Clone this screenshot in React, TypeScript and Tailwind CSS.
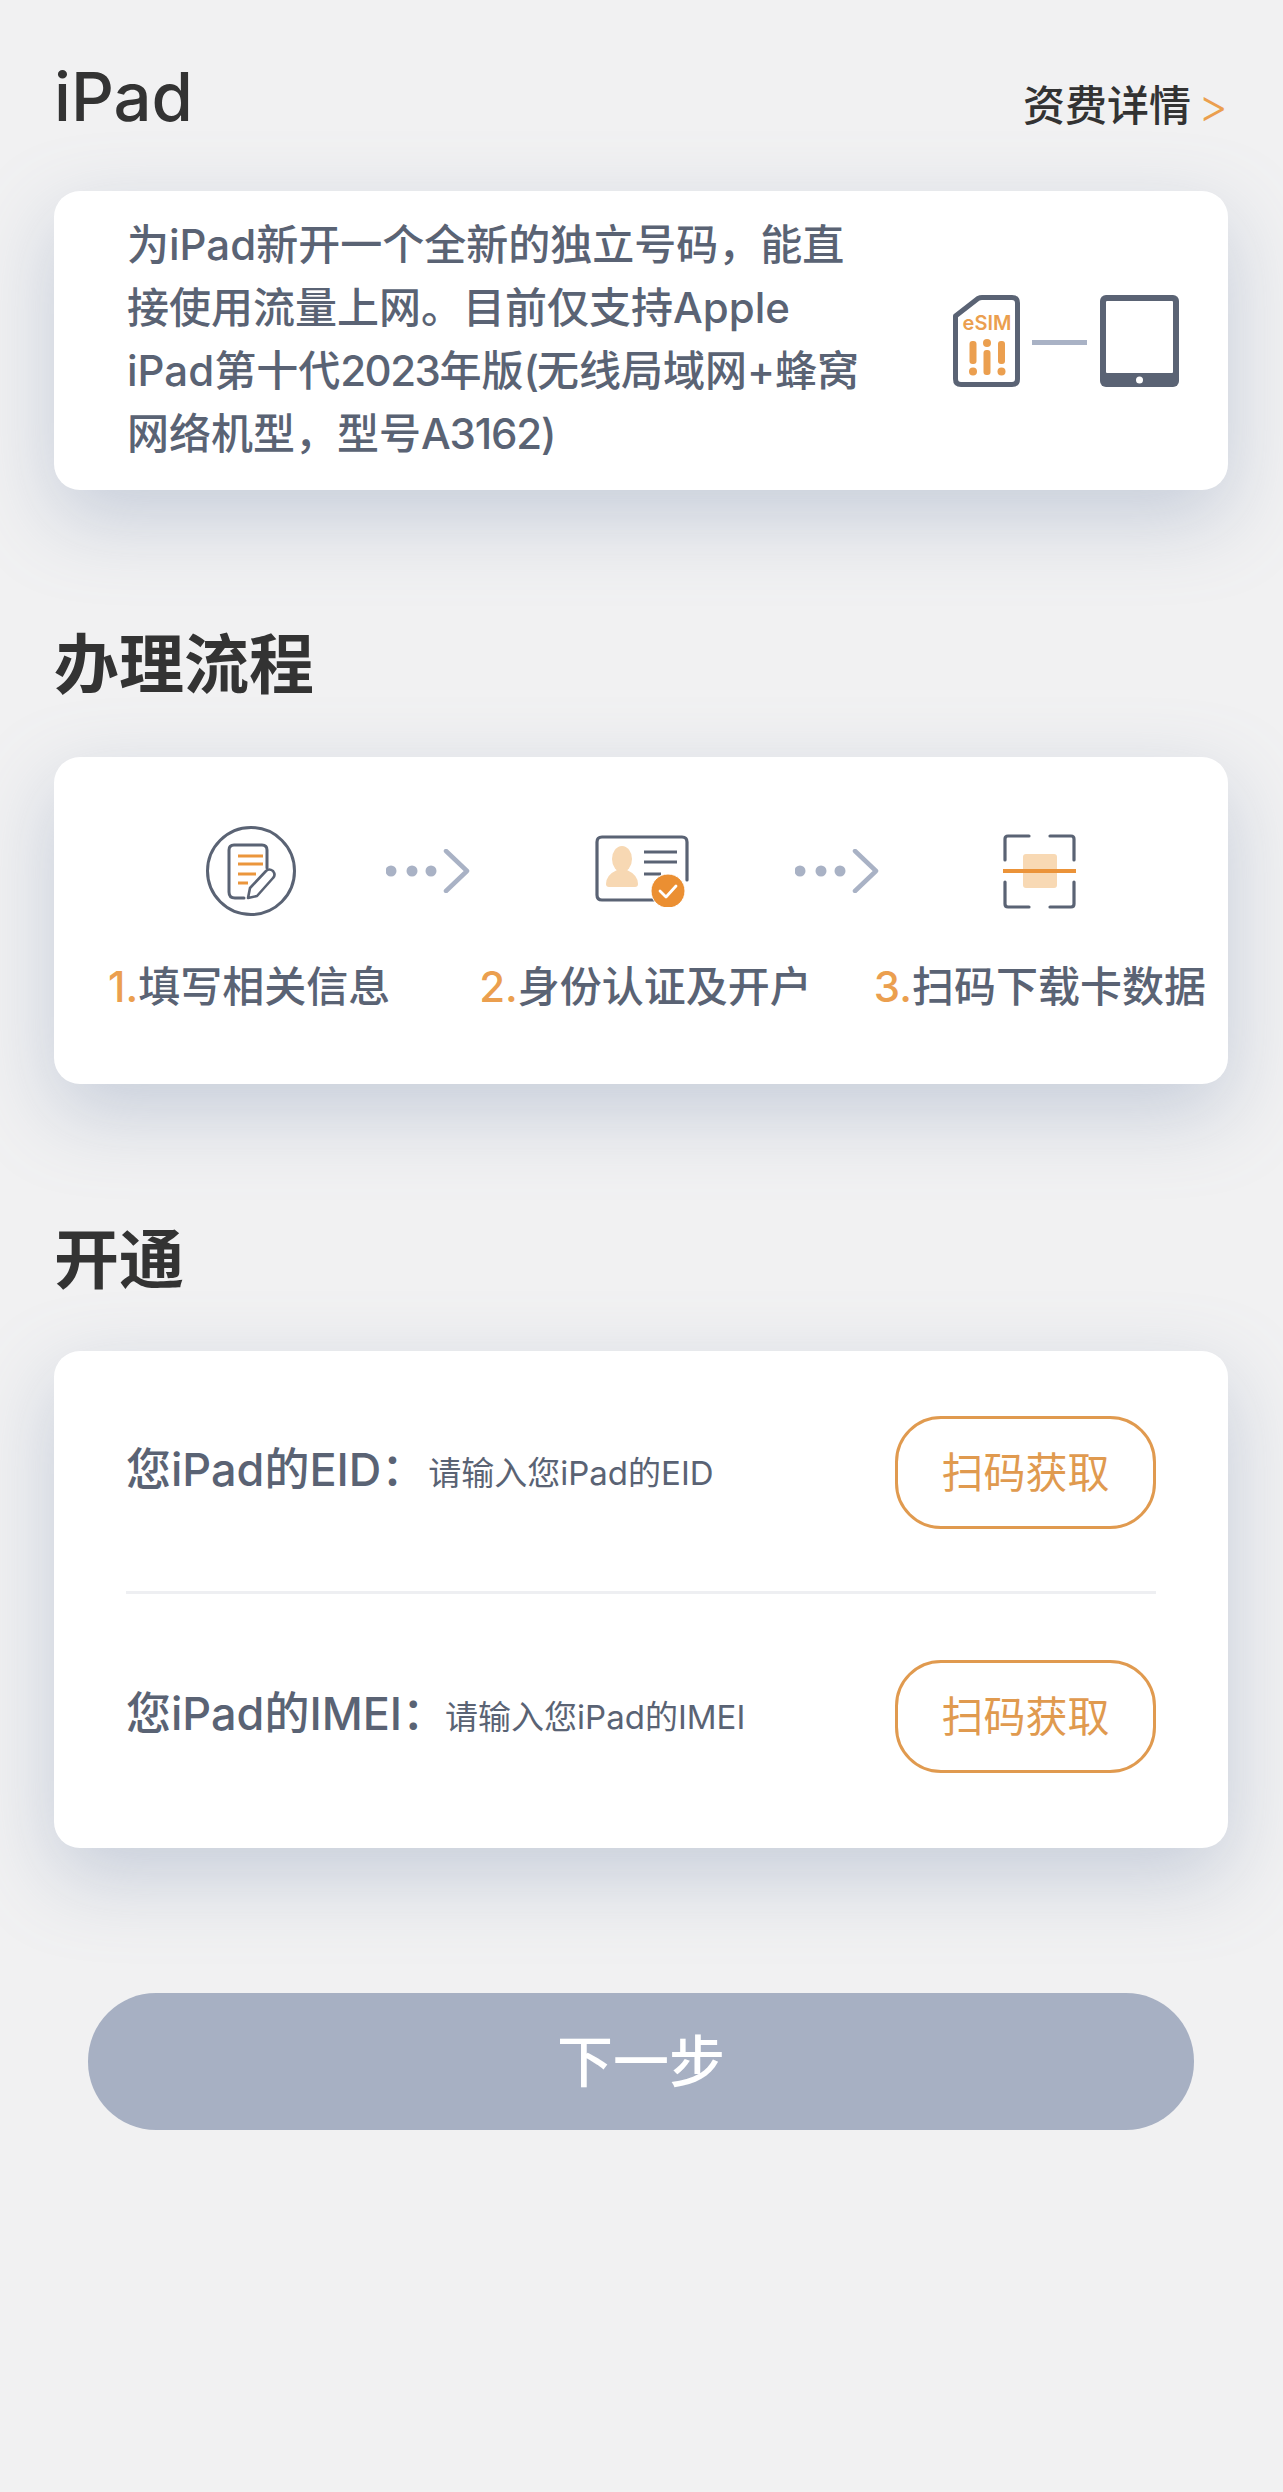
import React from "react";

const Arrow = () => (
  <svg width="84" height="44" viewBox="0 0 84 44" fill="none" className="shrink-0">
    <circle cx="5" cy="22" r="5.5" fill="#a9b2c5" />
    <circle cx="26" cy="22" r="5.5" fill="#a9b2c5" />
    <circle cx="45" cy="22" r="5.5" fill="#a9b2c5" />
    <path d="M60 2 L81 22 L60 42" stroke="#a9b2c5" strokeWidth="4.5" strokeLinecap="round" strokeLinejoin="round" />
  </svg>
);

const SimIcon = () => (
  <svg width="226" height="92" viewBox="0 0 226 92" fill="none" className="shrink-0">
    <path d="M2.5 21 L25 3.5 Q27 2.5 29 2.5 H59 Q64.500 2.5 64.500 8 V84 Q64.500 89.500 59 89.500 H8 Q2.500 89.500 2.500 84 Z" fill="#fff" stroke="#5a6374" strokeWidth="5" strokeLinejoin="round" />
    <text x="34" y="35" textAnchor="middle" fontSize="20" fontWeight="600" fill="#eb9f4f" fontFamily="Inter, sans-serif">eSIM</text>
    <rect x="16.500" y="46" width="7" height="23" rx="3" fill="#eb9f4f" />
    <circle cx="20" cy="76.500" r="4" fill="#eb9f4f" />
    <circle cx="34" cy="48" r="4" fill="#eb9f4f" />
    <rect x="30.500" y="55" width="7" height="25" rx="3" fill="#eb9f4f" />
    <rect x="45" y="46" width="7" height="23" rx="3" fill="#eb9f4f" />
    <circle cx="48.500" cy="76.500" r="4" fill="#eb9f4f" />
    <rect x="79" y="45" width="55" height="5" fill="#a9b2c5" />
    <rect x="147" y="0" width="79" height="92" rx="6" fill="#5a6374" />
    <rect x="153" y="6" width="67" height="72" rx="1" fill="#fff" />
    <circle cx="186.500" cy="85" r="3.500" fill="#fff" />
  </svg>
);

const FormIcon = () => (
  <svg width="90" height="90" viewBox="0 0 90 90" fill="none" className="shrink-0">
    <circle cx="45" cy="45" r="43.500" stroke="#5a6374" strokeWidth="3" />
    <path d="M61 42 V24 Q61 19 56 19 H28 Q23 19 23 24 V66 Q23 72 29 72 H38" stroke="#5a6374" strokeWidth="3" strokeLinecap="round" />
    <path d="M32 30 H57 M32 38 H57 M32 48 H50 M32 57 H42" stroke="#eb963c" strokeWidth="3.200" />
    <path d="M42 72 L44 62 L60 45 Q63 42 67 45 Q70 49 67 52 L51 70 Z" fill="#fff" stroke="#5a6374" strokeWidth="2.600" strokeLinejoin="round" />
  </svg>
);

const IdIcon = () => (
  <svg width="94" height="72" viewBox="0 0 94 72" fill="none" className="shrink-0">
    <path d="M60 65 H7 Q2 65 2 60 V7 Q2 2 7 2 H87 Q92 2 92 7 V45" stroke="#5a6374" strokeWidth="3.200" strokeLinecap="round" />
    <ellipse cx="27" cy="24" rx="10" ry="13" fill="#f7d8b3" />
    <path d="M11 49 Q11 40 22 35 H32 Q43 40 43 49 Q43 52 40 52 H14 Q11 52 11 49 Z" fill="#f7d8b3" />
    <path d="M49 17 H82 M49 27 H82 M49 39 H66" stroke="#5a6374" strokeWidth="3.200" />
    <circle cx="73" cy="56" r="17" fill="#eb8f32" stroke="#fff" strokeWidth="1" />
    <path d="M65 56 L71 62 L81 51" stroke="#fff" strokeWidth="2.800" fill="none" strokeLinecap="round" strokeLinejoin="round" />
  </svg>
);

const ScanIcon = () => (
  <svg width="73" height="75" viewBox="0 0 73 75" fill="none" className="shrink-0">
    <rect x="20" y="20" width="34" height="34" rx="3" fill="#f8d9b4" />
    <path d="M2 26 V5 Q2 2 5 2 H26 M47 2 H68 Q71 2 71 5 V26 M2 48 V70 Q2 73 5 73 H26 M47 73 H68 Q71 73 71 70 V48" stroke="#5a6374" strokeWidth="3.200" strokeLinecap="round" />
    <rect x="0" y="35" width="73" height="4" fill="#eb9339" />
  </svg>
);

const ScanButton = () => (
  <div className="w-[261px] h-[113px] shrink-0 rounded-[46px] border-[3px] border-[#e09a4f] flex items-center justify-center text-[42px] text-[#e09a4f]">
    扫码获取
  </div>
);

const shadow = "bg-white rounded-[26px] shadow-[0_28px_80px_rgba(130,146,180,0.38)]";

export default function App() {
  return (
    <div className="min-h-[2492px] bg-[#f1f1f2] pl-[54px] pr-[55px] pt-[65px] [font-family:Inter,'Noto_Sans_CJK_SC',sans-serif] text-[#5a6374]">
      <div className="flex items-center justify-between h-[64px]">
        <h1 className="text-[67px] leading-[64px] font-medium text-[#333333]">iPad</h1>
        <div className="text-[42px] font-medium text-[#333333] mt-[16px] whitespace-nowrap flex items-center">
          资费详情<span className="text-[#eb9f4f] font-light text-[46px] ml-[7px] leading-none">&gt;</span>
        </div>
      </div>

      <section className={`${shadow} mt-[62px] h-[299px] pl-[73px] pr-[49px] flex items-center justify-between`}>
        <p className="text-[42px] leading-[63px] font-medium whitespace-nowrap pb-[3px]">
          为iPad新开一个全新的独立号码，能直<br />
          接使用流量上网。目前仅支持Apple<br />
          iPad第十代<span className="tracking-[-1.5px]">2023</span>年版<span className="tracking-[-2px]">(</span>无线局域网+蜂窝<br />
          网络机型，型号<span className="tracking-[-1.2px]">A3162)</span>
        </p>
        <SimIcon />
      </section>

      <h2 className="mt-[143px] text-[65px] leading-[64px] font-semibold text-[#333333]">办理流程</h2>

      <section className={`${shadow} mt-[60px] h-[327px] pt-[69px]`}>
        <div className="flex items-center h-[90px] pl-[152px]">
          <FormIcon />
          <div className="ml-[90px]"><Arrow /></div>
          <div className="ml-[125px]"><IdIcon /></div>
          <div className="ml-[106px]"><Arrow /></div>
          <div className="ml-[124px]"><ScanIcon /></div>
        </div>
        <div className="flex mt-[43px] pl-[54px] text-[42px] leading-[56px] font-medium whitespace-nowrap">
          <div><span className="text-[#eb9f4f]">1.</span>填写相关信息</div>
          <div className="ml-[89px]"><span className="text-[#eb9f4f]">2.</span>身份认证及开户</div>
          <div className="ml-[62px]"><span className="text-[#eb9f4f]">3.</span>扫码下载卡数据</div>
        </div>
      </section>

      <h2 className="mt-[144px] text-[65px] leading-[64px] font-semibold text-[#333333]">开通</h2>

      <section className={`${shadow} mt-[59px] h-[497px] px-[72px]`}>
        <div className="flex items-center justify-between pt-[65px] pb-[62px] border-b-[3px] border-[#eeeff2]">
          <div className="flex items-center whitespace-nowrap">
            <span className="text-[45px] font-medium mb-[5px]">您iPad的EID：</span>
            <span className="text-[33px] ml-[2px] mt-[2px]">请输入您iPad的EID</span>
          </div>
          <ScanButton />
        </div>
        <div className="flex items-center justify-between pt-[66px]">
          <div className="flex items-center whitespace-nowrap">
            <span className="text-[45px] font-medium mb-[5px]">您iPad的IMEI：</span>
            <span className="text-[33px] -ml-[2px] mt-[2px]">请输入您iPad的IMEI</span>
          </div>
          <ScanButton />
        </div>
      </section>

      <div className="mt-[145px] mx-[34px] h-[137px] rounded-[68px] bg-[#a7b0c3] flex items-center justify-center text-[56px] font-medium text-white">
        下一步
      </div>
    </div>
  );
}
